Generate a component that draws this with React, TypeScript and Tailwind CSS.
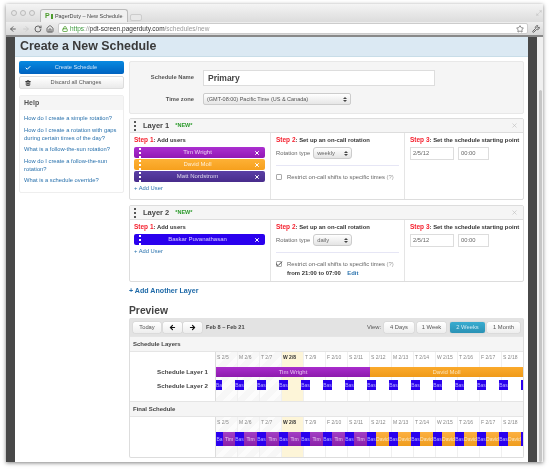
import { ArrowLeft, ArrowRight, Check, Home, Lock, Maximize2, RotateCw, Star, Trash2, Wrench, X } from 'lucide-react'

const days = ['S 2/5', 'M 2/6', 'T 2/7', 'W 2/8', 'T 2/9', 'F 2/10', 'S 2/11', 'S 2/12', 'M 2/13', 'T 2/14', 'W 2/15', 'T 2/16', 'F 2/17', 'S 2/18']

const helpLinks = [
  'How do I create a simple rotation?',
  'How do I create a rotation with gaps during certain times of the day?',
  'What is a follow-the-sun rotation?',
  'How do I create a follow-the-sun rotation?',
  'What is a schedule override?',
]

function Grip() {
  return (
    <div className="flex flex-col gap-[2px]">
      <span className="w-[2px] h-[2px] bg-current" />
      <span className="w-[2px] h-[2px] bg-current" />
      <span className="w-[2px] h-[2px] bg-current" />
    </div>
  )
}

function SelectArrows() {
  return (
    <div className="flex flex-col items-center gap-[1px] text-[#444]">
      <span className="w-0 h-0 border-x-[2px] border-x-transparent border-b-[2px] border-b-current" />
      <span className="w-0 h-0 border-x-[2px] border-x-transparent border-t-[2px] border-t-current" />
    </div>
  )
}

function UserBar({ name, color }: { name: string; color: string }) {
  return (
    <div className={`h-[11px] rounded-[2px] flex items-center justify-between px-[5px] text-white ${color}`}>
      <Grip />
      <span className="text-[6px] opacity-80">{name}</span>
      <X size={6} strokeWidth={4} />
    </div>
  )
}

function StepTitle({ n, text }: { n: number; text: string }) {
  return (
    <div className="text-[5.9px] leading-[8px] font-bold text-[#333] whitespace-nowrap">
      <span className="text-[#f5202e] text-[6.5px]">Step {n}</span>: {text}
    </div>
  )
}

function LayerCard({
  title,
  type,
  users,
  checked,
  height,
}: {
  title: string
  type: string
  users: { name: string; color: string }[]
  checked?: boolean
  height: string
}) {
  return (
    <div className={`border border-[#ddd] rounded-[2px] flex flex-col ${height}`}>
      <div className="h-[14px] shrink-0 bg-[#f5f5f5] border-b border-[#ddd] flex items-center pl-[4px] pr-[5px] text-[#555]">
        <Grip />
        <span className="ml-[7px] text-[7.5px] font-bold text-[#444]">{title}</span>
        <span className="ml-[6px] text-[5.5px] font-bold text-[#2a9a2a]">*NEW*</span>
        <X size={7} className="ml-auto text-[#bbb]" />
      </div>
      <div className="flex flex-1">
        <div className="w-[141px] shrink-0 border-r border-[#e5e5e5] pl-[4px] pr-[5px] pt-[3px]">
          <StepTitle n={1} text="Add users" />
          <div className="mt-[3px] flex flex-col gap-[1px]">
            {users.map((u) => (
              <UserBar key={u.name} name={u.name} color={u.color} />
            ))}
          </div>
          <div className="mt-[2px] text-[5.8px] leading-[8px] text-[#2a72ad]">+ Add User</div>
        </div>
        <div className="w-[134px] shrink-0 border-r border-[#e5e5e5] pl-[5px] pr-[5px] pt-[3px]">
          <StepTitle n={2} text="Set up an on-call rotation" />
          <div className="mt-[3px] flex items-center gap-[3px] text-[5.8px] text-[#666]">
            Rotation type
            <div className="w-[39px] h-[12px] border border-[#ccc] rounded-[3px] bg-gradient-to-b from-white to-[#e4e4e4] flex items-center justify-between px-[3px]">
              <span>{type}</span>
              <SelectArrows />
            </div>
          </div>
          <div className="mt-[6px] border-t border-[#e6e6f5]" />
          <div className="mt-[7px] flex items-center gap-[5px] text-[5.9px] leading-[8px] text-[#666] whitespace-nowrap">
            <span className="w-[6px] h-[6px] border border-[#aaa] rounded-[1px] bg-white flex items-center justify-center shrink-0">
              {checked && <Check size={8} strokeWidth={3} className="text-[#444] shrink-0" />}
            </span>
            <span>
              Restrict on-call shifts to specific times <span className="text-[#999]">(?)</span>
            </span>
          </div>
          {checked && (
            <div className="mt-[1px] ml-[11px] text-[5.9px] leading-[8px] font-bold text-[#333]">
              from 21:00 to 07:00 <span className="ml-[5px] text-[#2a72ad]">Edit</span>
            </div>
          )}
        </div>
        <div className="flex-1 pl-[5px] pt-[3px]">
          <StepTitle n={3} text="Set the schedule starting point" />
          <div className="mt-[3px] flex gap-[4px] text-[5.8px] text-[#666]">
            <div className="w-[44px] h-[13px] border border-[#ddd] bg-white flex items-center px-[2px]">2/5/12</div>
            <div className="w-[31px] h-[13px] border border-[#ddd] bg-white flex items-center px-[2px]">00:00</div>
          </div>
        </div>
      </div>
    </div>
  )
}

function DayGrid({ height }: { height: string }) {
  return (
    <div className={`absolute inset-x-0 top-0 grid grid-cols-[repeat(14,22px)] ${height}`}>
      {days.map((d, i) => (
        <div
          key={i}
          className={`border-r border-[#f0f0f0] ${
            i === 3
              ? 'bg-[#fdf5d8]'
              : i < 3
                ? 'bg-[repeating-linear-gradient(135deg,#f7f7f7_0,#f7f7f7_6px,#fcfcfc_6px,#fcfcfc_11px)]'
                : 'bg-white'
          }`}
        />
      ))}
    </div>
  )
}

function DayLabels() {
  return (
    <div className="grid grid-cols-[repeat(14,22px)] h-[15px] relative">
      {days.map((d, i) => (
        <div key={i} className={`pl-[1px] pt-[2px] text-[5px] whitespace-nowrap ${i === 3 ? 'font-bold text-[#333]' : 'text-[#888]'}`}>
          {d}
        </div>
      ))}
    </div>
  )
}

function CalButton({ children, active, w }: { children: React.ReactNode; active?: boolean; w: string }) {
  return (
    <div
      className={`h-[11px] ${w} rounded-[2px] flex items-center justify-center text-[5.8px] shadow-[0_0_1px_#999] ${
        active ? 'bg-gradient-to-b from-[#39acd0] to-[#2a92b5] text-[#cfeaf5]' : 'bg-gradient-to-b from-white to-[#eee] text-[#555]'
      }`}
    >
      {children}
    </div>
  )
}

function FinalBars() {
  const blue = 'bg-[#2a00ee] text-[#b9b0ff]'
  const blocks: { w: string; cls: string; label: string }[] = [{ w: 'w-[7px]', cls: blue, label: 'Ba' }]
  for (let i = 0; i < 14; i++) {
    const isTim = i < 7
    blocks.push({
      w: i === 0 ? 'w-[12px]' : 'w-[13px]',
      cls: isTim ? 'bg-gradient-to-b from-[#a33fc4] to-[#8a1fa8] text-[#e8c8f0]' : 'bg-gradient-to-b from-[#fcb040] to-[#ef9d1c] text-[#fbe6c0]',
      label: isTim ? 'Tim' : 'David',
    })
    if (i < 13) blocks.push({ w: 'w-[9px]', cls: blue, label: 'Bas' })
  }
  return (
    <div className="relative flex h-[14px] overflow-hidden">
      {blocks.map((b, i) => (
        <div key={i} className={`${b.w} shrink-0 overflow-hidden text-center text-[5px] leading-[14px] whitespace-nowrap ${b.cls}`}>
          {b.label}
        </div>
      ))}
      <div className="w-[3px] shrink-0 bg-[#2a00ee]" />
    </div>
  )
}

export default function App() {
  return (
    <div className="w-[550px] h-[471px] bg-white overflow-hidden pl-[6px] pt-[4px] font-['Liberation_Sans',Arial,sans-serif] blur-[0.3px]">
      <div className="w-[537px] h-[458px] shadow-[0_1px_4px_rgba(0,0,0,0.5)] flex flex-col">
        {/* tab strip */}
        <div className="h-[18px] bg-gradient-to-b from-[#f4f4f4] to-[#dcdcdc] flex items-end shrink-0">
          <div className="flex gap-[3px] self-center pl-[5px]">
            <span className="w-[6px] h-[6px] rounded-full border border-[#bbb] bg-[#e5e5e5]" />
            <span className="w-[6px] h-[6px] rounded-full border border-[#bbb] bg-[#e5e5e5]" />
            <span className="w-[6px] h-[6px] rounded-full border border-[#bbb] bg-[#e5e5e5]" />
          </div>
          <div className="ml-[5px] w-[88px] h-[13px] bg-[#f0f0f0] border border-b-0 border-[#bbb] rounded-t-[3px] flex items-center pl-[4px] pr-[3px] gap-[1px]">
            <span className="text-[7px] font-bold text-[#4c9c2c]">P</span>
            <span className="w-[4px] h-[5px] border border-[#4c9c2c]" />
            <span className="ml-[1px] text-[5.5px] text-[#444] whitespace-nowrap">PagerDuty – New Schedule</span>
            <X size={5} className="ml-auto text-[#999]" />
          </div>
          <div className="ml-[2px] mb-[1px] w-[12px] h-[7px] bg-[#e8e8e8] border border-[#ccc] rounded-[2px]" />
          <Maximize2 size={6} className="ml-auto mr-[1px] self-center text-[#bbb]" />
        </div>
        {/* toolbar */}
        <div className="h-[15px] bg-gradient-to-b from-[#eee] to-[#d8d8d8] border-b-2 border-[#888] flex items-center shrink-0 pl-[3px] text-[#666]">
          <ArrowLeft size={8} strokeWidth={3} />
          <ArrowRight size={8} strokeWidth={3} className="ml-[5px] text-[#ccc]" />
          <RotateCw size={8} strokeWidth={3} className="ml-[4px]" />
          <Home size={8} strokeWidth={3} className="ml-[4px]" />
          <div className="ml-[4px] w-[470px] h-[11px] bg-white border border-[#ccc] rounded-[2px] flex items-center pl-[3px] pr-[3px] text-[6.5px]">
            <Lock size={6} strokeWidth={3} className="text-[#4c9c2c]" />
            <span className="ml-[2px] text-[#3d9a3d]">https</span>
            <span className="text-[#999]">://</span>
            <span className="text-[#333]">pdt-screen.pagerduty.com</span>
            <span className="text-[#999]">/schedules/new</span>
            <Star size={8} className="ml-auto text-[#555]" />
          </div>
          <Wrench size={8} strokeWidth={3} className="ml-[4px]" />
        </div>
        {/* viewport */}
        <div className="flex-1 flex min-h-0">
          <div className="w-[9px] bg-[#484848] shrink-0" />
          <div className="w-[513px] bg-white shrink-0 flex flex-col">
            <div className="h-[20px] shrink-0 bg-[#dbe9f3] border-b border-[#c8dde8] flex items-center pl-[5px] text-[#3a3a3a] text-[12.4px] font-bold">
              Create a New Schedule
            </div>
            <div className="flex pl-[4px] pt-[4px]">
              {/* sidebar */}
              <div className="w-[105px] shrink-0 flex flex-col">
                <div className="h-[13px] rounded-[2px] bg-gradient-to-b from-[#0a8ae0] to-[#0062c0] text-[#cfe6fa] text-[5.7px] flex items-center relative justify-center pl-[9px]">
                  <Check size={6} strokeWidth={4} className="absolute left-[6px] text-white" />
                  Create Schedule
                </div>
                <div className="mt-[2px] h-[13px] rounded-[2px] border border-[#ddd] bg-gradient-to-b from-white to-[#eaeaea] text-[#555] text-[5.7px] flex items-center relative justify-center pl-[9px]">
                  <Trash2 size={6} strokeWidth={3} className="absolute left-[5px] text-[#222]" />
                  Discard all Changes
                </div>
                <div className="mt-[6px] h-[98px] border border-[#eee] rounded-[2px]">
                  <div className="h-[14px] bg-[#f5f5f5] flex items-center pl-[4px] text-[7px] font-bold text-[#555]">Help</div>
                  <div className="pl-[4px] pr-[2px] pt-[4px] flex flex-col gap-[3.5px] text-[5.8px] leading-[8px] text-[#2a72ad]">
                    {helpLinks.map((l) => (
                      <div key={l}>{l}</div>
                    ))}
                  </div>
                </div>
              </div>
              {/* main */}
              <div className="ml-[5px] w-[395px] shrink-0 flex flex-col">
                <div className="h-[53px] bg-[#f5f5f5] border border-[#e8e8e8] rounded-[2px] grid grid-cols-[64px_1fr] gap-x-[9px] pt-[8px] content-start">
                  <div className="h-[15px] flex items-center justify-end text-[5.8px] font-bold text-[#555]">Schedule Name</div>
                  <div className="w-[232px] h-[16px] bg-white border border-[#ddd] flex items-center pl-[4px] text-[8.5px] font-bold text-[#444]">Primary</div>
                  <div className="mt-[7px] h-[12px] flex items-center justify-end text-[5.8px] font-bold text-[#555]">Time zone</div>
                  <div className="mt-[7px] w-[148px] h-[12px] border border-[#ccc] rounded-[2px] bg-gradient-to-b from-white to-[#e6e6e6] flex items-center justify-between px-[3px] text-[5.5px] text-[#555]">
                    (GMT-08:00) Pacific Time (US &amp; Canada)
                    <SelectArrows />
                  </div>
                </div>
                <div className="mt-[4px]">
                  <LayerCard
                    title="Layer 1"
                    type="weekly"
                    height="h-[82px]"
                    users={[
                      { name: 'Tim Wright', color: 'bg-gradient-to-b from-[#ab2fd0] to-[#9217b5]' },
                      { name: 'David Moll', color: 'bg-gradient-to-b from-[#fdb135] to-[#f7a01c]' },
                      { name: 'Matt Nordstrom', color: 'bg-gradient-to-b from-[#5a3fa5] to-[#482c8c]' },
                    ]}
                  />
                </div>
                <div className="mt-[5px]">
                  <LayerCard
                    title="Layer 2"
                    type="daily"
                    checked
                    height="h-[77px]"
                    users={[{ name: 'Baskar Puvanathasan', color: 'bg-[#2a00ee]' }]}
                  />
                </div>
                <div className="mt-[4px] text-[7.1px] leading-[10px] font-bold text-[#1f6aa8]">+ Add Another Layer</div>
                <div className="mt-[8px] text-[10.3px] leading-[13px] font-bold text-[#444]">Preview</div>
                {/* calendar */}
                <div className="mt-[1px] border border-[#ddd] border-t-0 rounded-[2px]">
                  <div className="h-[18px] bg-[#e3e3e3] flex items-center pl-[3px] pr-[3px]">
                    <CalButton w="w-[28px]">Today</CalButton>
                    <CalButton w="w-[19px] ml-[2px]">
                      <ArrowLeft size={7} strokeWidth={4} className="text-[#111]" />
                    </CalButton>
                    <CalButton w="w-[19px] ml-[1px]">
                      <ArrowRight size={7} strokeWidth={4} className="text-[#111]" />
                    </CalButton>
                    <span className="ml-[4px] text-[5.6px] font-bold text-[#444]">Feb 8 – Feb 21</span>
                    <span className="ml-auto mr-[3px] text-[5.8px] text-[#555]">View:</span>
                    <CalButton w="w-[30px]">4 Days</CalButton>
                    <CalButton w="w-[29px] ml-[3px]">1 Week</CalButton>
                    <CalButton active w="w-[35px] ml-[4px]">2 Weeks</CalButton>
                    <CalButton w="w-[33px] ml-[2px]">1 Month</CalButton>
                  </div>
                  <div className="h-[16px] bg-[#f5f5f5] border-y border-[#e5e5e5] flex items-center pl-[3px] text-[6px] font-bold text-[#444]">
                    Schedule Layers
                  </div>
                  <div className="flex h-[49px]">
                    <div className="w-[86px] shrink-0 border-r border-[#ddd] pt-[16px] pr-[7px] flex flex-col items-end gap-[6px] text-[6.2px] leading-[8px] font-bold text-[#444]">
                      <div>Schedule Layer 1</div>
                      <div>Schedule Layer 2</div>
                    </div>
                    <div className="relative flex-1 overflow-hidden">
                      <DayGrid height="h-[49px]" />
                      <DayLabels />
                      <div className="relative flex h-[10px] text-[6px] leading-[10px] text-center">
                        <div className="w-[154px] bg-gradient-to-b from-[#a92ccc] to-[#8d1bad] text-[#e5c3ef]">Tim Wright</div>
                        <div className="flex-1 bg-gradient-to-b from-[#fbaa2c] to-[#ef9a18] text-[#fbe3b8]">David Moll</div>
                      </div>
                      <div className="relative mt-[3px] flex h-[10px] gap-[13px] text-[5px] leading-[10px] text-[#b9b0ff] whitespace-nowrap">
                        <div className="w-[6px] shrink-0 overflow-hidden bg-[#2a00ee]">Ba</div>
                        {[...Array(13).keys()].map((i) => (
                          <div key={i} className="w-[9px] shrink-0 overflow-hidden text-center bg-[#2a00ee]">Bas</div>
                        ))}
                        <div className="w-[3px] shrink-0 bg-[#2a00ee]" />
                      </div>
                    </div>
                  </div>
                  <div className="h-[16px] bg-[#f5f5f5] border-y border-[#e5e5e5] flex items-center pl-[3px] text-[6px] font-bold text-[#444]">
                    Final Schedule
                  </div>
                  <div className="flex h-[40px]">
                    <div className="w-[86px] shrink-0 border-r border-[#ddd]" />
                    <div className="relative flex-1 overflow-hidden">
                      <DayGrid height="h-[40px]" />
                      <DayLabels />
                      <FinalBars />
                    </div>
                  </div>
                </div>
              </div>
            </div>
          </div>
          <div className="w-[9px] bg-[#484848] shrink-0" />
          <div className="flex-1 bg-[#f0f0f0] pt-[53px] pl-[2px] pr-[1px]">
            <div className="h-full bg-[#c6c6c6] rounded-[2px]" />
          </div>
        </div>
      </div>
    </div>
  )
}
